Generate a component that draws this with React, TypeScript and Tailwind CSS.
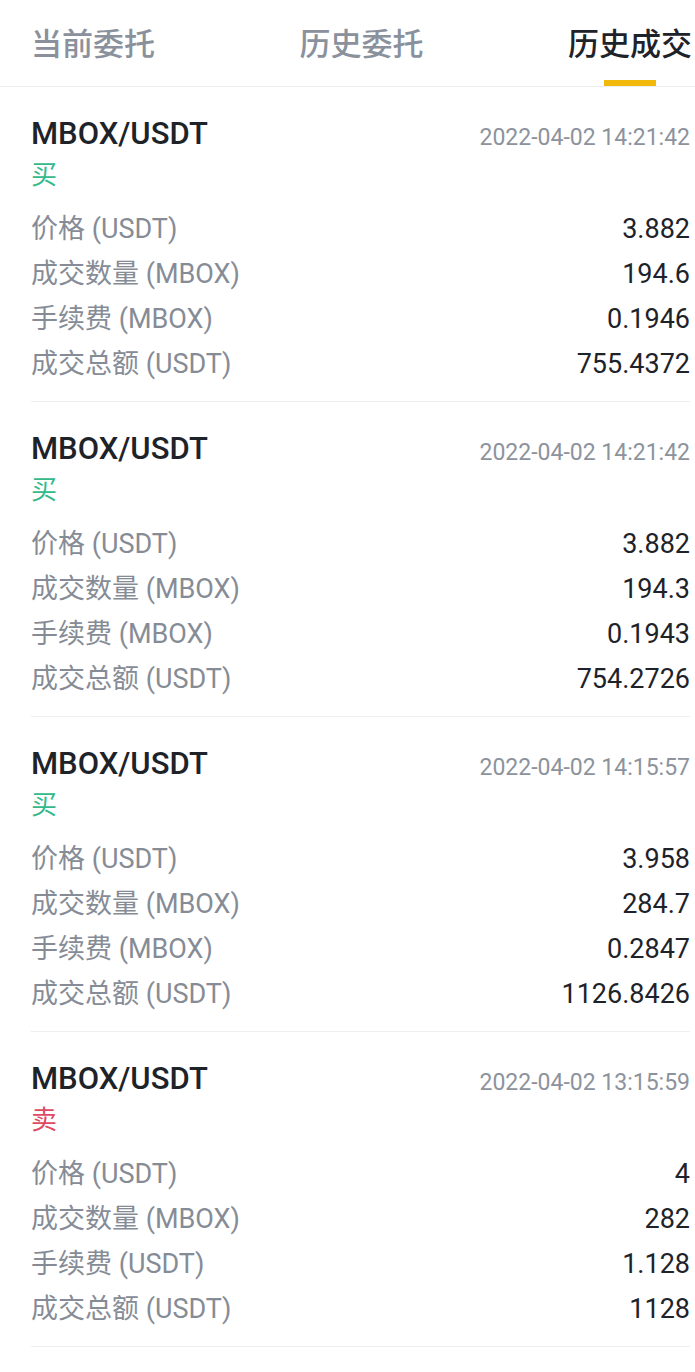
import { useState } from "react";

type Trade = {
  pair: string;
  time: string;
  side: "buy" | "sell";
  rows: [string, string][];
};

const trades: Trade[] = [
  {
    pair: "MBOX/USDT",
    time: "2022-04-02 14:21:42",
    side: "buy",
    rows: [
      ["价格 (USDT)", "3.882"],
      ["成交数量 (MBOX)", "194.6"],
      ["手续费 (MBOX)", "0.1946"],
      ["成交总额 (USDT)", "755.4372"],
    ],
  },
  {
    pair: "MBOX/USDT",
    time: "2022-04-02 14:21:42",
    side: "buy",
    rows: [
      ["价格 (USDT)", "3.882"],
      ["成交数量 (MBOX)", "194.3"],
      ["手续费 (MBOX)", "0.1943"],
      ["成交总额 (USDT)", "754.2726"],
    ],
  },
  {
    pair: "MBOX/USDT",
    time: "2022-04-02 14:15:57",
    side: "buy",
    rows: [
      ["价格 (USDT)", "3.958"],
      ["成交数量 (MBOX)", "284.7"],
      ["手续费 (MBOX)", "0.2847"],
      ["成交总额 (USDT)", "1126.8426"],
    ],
  },
  {
    pair: "MBOX/USDT",
    time: "2022-04-02 13:15:59",
    side: "sell",
    rows: [
      ["价格 (USDT)", "4"],
      ["成交数量 (MBOX)", "282"],
      ["手续费 (USDT)", "1.128"],
      ["成交总额 (USDT)", "1128"],
    ],
  },
];

const tabs = ["当前委托", "历史委托", "历史成交"];

function TradeCard({ trade }: { trade: Trade }) {
  return (
    <div className="ml-[31px] mr-[5px] pt-[27px] pb-[14px] border-b border-[#eceef1]">
      <div className="flex items-center justify-between h-[40px]">
        <span className="text-[31px] font-medium text-[#1e2329]">{trade.pair}</span>
        <span className="text-[23px] text-[#8d939c] mt-[8px]">{trade.time}</span>
      </div>
      <div
        className={`h-[42px] flex items-center text-[26px] ${
          trade.side === "buy" ? "text-[#33b98a]" : "text-[#de4a62]"
        }`}
      >
        {trade.side === "buy" ? "买" : "卖"}
      </div>
      <div className="mt-[11px]">
        {trade.rows.map(([label, value]) => (
          <div key={label} className="flex items-center justify-between h-[45px] text-[27px]">
            <span className="text-[#868c96]">{label}</span>
            <span className="text-[#1e2329]">{value}</span>
          </div>
        ))}
      </div>
    </div>
  );
}

export default function App() {
  const [active, setActive] = useState(2);

  return (
    <div
      className="w-[695px] min-h-[1372px] bg-white"
      style={{ fontFamily: '"Roboto", "Noto Sans CJK SC", sans-serif' }}
    >
      <div className="flex justify-between pl-[31px] pr-[3px] h-[87px] border-b border-[#eceef1]">
        {tabs.map((tab, i) => (
          <button
            key={tab}
            onClick={() => setActive(i)}
            className={`relative flex items-start pt-[23px] text-[31px] font-medium leading-[44px] ${
              active === i ? "text-[#1e2329]" : "text-[#8a919c]"
            }`}
          >
            {tab}
            {active === i && (
              <span className="absolute bottom-0 left-1/2 -translate-x-1/2 w-[52px] h-[6px] bg-[#f0b90b]" />
            )}
          </button>
        ))}
      </div>
      {trades.map((t, i) => (
        <TradeCard key={i} trade={t} />
      ))}
    </div>
  );
}
